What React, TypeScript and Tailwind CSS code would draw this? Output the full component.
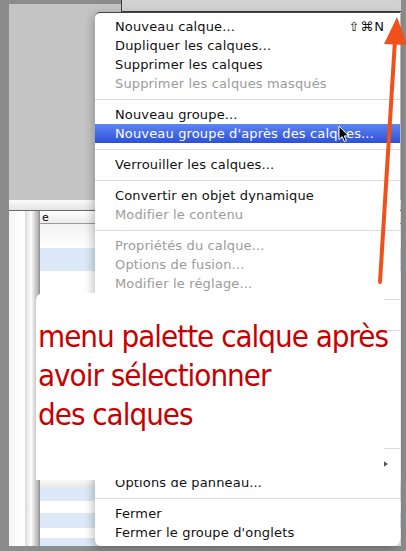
import React from 'react';

type Entry =
    | { kind: 'item'; label: string; disabled?: boolean; active?: boolean; shortcut?: string; submenu?: boolean }
    | { kind: 'sep' }
    | { kind: 'gap'; h: string };

const entries: Entry[] = [
    { kind: 'item', label: 'Nouveau calque...', shortcut: '⇧⌘N' },
    { kind: 'item', label: 'Dupliquer les calques...' },
    { kind: 'item', label: 'Supprimer les calques' },
    { kind: 'item', label: 'Supprimer les calques masqués', disabled: true },
    { kind: 'sep' },
    { kind: 'item', label: 'Nouveau groupe...' },
    { kind: 'item', label: "Nouveau groupe d'après des calques...", active: true },
    { kind: 'sep' },
    { kind: 'item', label: 'Verrouiller les calques...' },
    { kind: 'sep' },
    { kind: 'item', label: 'Convertir en objet dynamique' },
    { kind: 'item', label: 'Modifier le contenu', disabled: true },
    { kind: 'sep' },
    { kind: 'item', label: 'Propriétés du calque...', disabled: true },
    { kind: 'item', label: 'Options de fusion...', disabled: true },
    { kind: 'item', label: 'Modifier le réglage...', disabled: true },
    { kind: 'sep' },
    { kind: 'item', label: '' },
    { kind: 'sep' },
    // hidden under the note
    { kind: 'gap', h: 'h-[106px]' },
    { kind: 'sep' },
    { kind: 'item', label: '', submenu: true },
    { kind: 'item', label: 'Options de panneau...' },
    { kind: 'sep' },
    { kind: 'item', label: 'Fermer' },
    { kind: 'item', label: "Fermer le groupe d'onglets" },
];

const MenuRow: React.FC<{ entry: Entry }> = ({ entry }) => {
    if (entry.kind === 'sep') {
        return (
            <div className="h-[12px] flex items-center">
                <div className="w-full h-px bg-[#dadada]" />
            </div>
        );
    }
    if (entry.kind === 'gap') return <div className={entry.h} />;

    const tone = entry.active
        ? 'bg-gradient-to-b from-[#5f84f2] to-[#2c4fd8] text-white'
        : entry.disabled
          ? 'text-[#9b9b9b]'
          : 'text-[#111]';

    return (
        <div className={`h-[19px] flex items-center pl-[20px] pr-[15px] leading-[19px] ${tone}`}>
            <span className="flex-1 whitespace-nowrap">{entry.label}</span>
            {entry.shortcut && <span className="tracking-[1px]">{entry.shortcut}</span>}
            {entry.submenu && (
                <span className="w-0 h-0 mr-[-3px] border-y-[4px] border-y-transparent border-l-[6px] border-l-[#555]" />
            )}
        </div>
    );
};

const Backdrop: React.FC = () => (
    <div className="flex flex-col h-full pl-[9px] pr-[5px] pb-[5px]">
        {/* strip of a window behind the menu */}
        <div className="flex h-[12px]">
            <div className="w-[112px] flex flex-col">
                <div className="h-[4px]" />
                <div className="flex-1 bg-[#c4c4c4]" />
            </div>
            <div className="flex-1 bg-[#d2d2d2] border-l border-b border-[#3c3c3c]" />
        </div>
        <div className="h-[188px] bg-[#c4c4c4]" />
        <div className="h-[11px] bg-gradient-to-b from-[#fafafa] to-[#e4e4e4] border-b border-[#6a6a6a]" />

        {/* layers panel */}
        <div className="flex-1 flex">
            <div className="w-[16px] bg-gradient-to-r from-[#f6f6f6] to-white" />
            <div className="w-[12px] bg-gradient-to-r from-[#d8d8d8] via-white to-[#bcbcbc]" />
            <div className="w-[3px] bg-gradient-to-r from-[#c8c8c8] to-[#8a8a8a]" />
            <div className="flex-1 flex flex-col bg-white">
                <div className="h-[13px] border-b border-[#9a9a9a] bg-gradient-to-b from-white to-[#ececec] text-[11px] leading-[13px] pl-[2px] text-black font-['DejaVu_Sans',sans-serif]">
                    e
                </div>
                <div className="h-[24px] bg-gradient-to-b from-[#f2f2f2] to-white" />
                <div className="h-[23px] bg-[#dde9f8]" />
                <div className="h-[207px] bg-white" />
                <div className="h-[10px] bg-gradient-to-b from-white to-[#e6e6e6]" />
                <div className="h-[13px] bg-[#dde9f8]" />
                <div className="h-[12px] bg-white" />
                <div className="h-[15px] bg-[#dde9f8]" />
                <div className="h-[10px] bg-white" />
                <div className="flex-1 bg-[#dde9f8]" />
            </div>
        </div>
    </div>
);

const LayerMenu: React.FC = () => (
    <div className="absolute left-[95px] top-[12px] w-[305px] h-[534px] bg-white rounded-tl-[5px] rounded-b-[6px] border-t border-[#444] pt-[4px] shadow-[-2px_3px_10px_rgba(0,0,0,0.25)] text-[13px] tracking-[0.15px] font-['DejaVu_Sans',sans-serif]">
        {entries.map((e, i) => (
            <MenuRow key={i} entry={e} />
        ))}
    </div>
);

const Note: React.FC = () => (
    <div className="absolute left-[36px] top-[293px] w-[348px] h-[187px] bg-white rounded-tl-[7px] pl-[2px] pt-[24px] text-[#c80000] text-[31px] leading-[39px] tracking-[-1px] font-['DejaVu_Sans_Condensed','DejaVu_Sans',sans-serif]">
        <p className="whitespace-nowrap">menu palette calque après</p>
        <p className="whitespace-nowrap">avoir sélectionner</p>
        <p className="whitespace-nowrap">des calques</p>
    </div>
);

const Pointer: React.FC = () => (
    <svg className="absolute left-[338px] top-[125px]" width="12" height="18" viewBox="0 0 12 18">
        <path d="M1 1 L1 14.5 L4.2 11.6 L6.4 16.6 L8.4 15.7 L6.3 10.9 L10.6 10.9 Z" fill="#000" stroke="#fff" strokeWidth="1" />
    </svg>
);

const ArrowMark: React.FC = () => (
    <svg className="absolute inset-0 pointer-events-none" width="406" height="551" viewBox="0 0 406 551">
        <line x1="380" y1="282" x2="395" y2="40" stroke="#f0501a" strokeWidth="4" strokeLinecap="round" />
        <polygon points="397,17 384,44 407,45" fill="#f0501a" />
    </svg>
);

export default function App() {
    return (
        <div className="relative w-[406px] h-[551px] overflow-hidden bg-[#8c8c8c]">
            <Backdrop />
            <LayerMenu />
            <Note />
            <Pointer />
            <ArrowMark />
        </div>
    );
}
